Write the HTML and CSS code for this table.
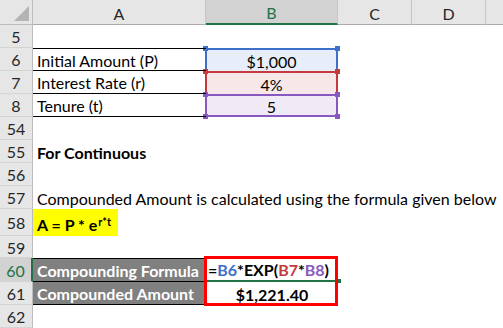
FILE: index.html
```html
<!DOCTYPE html>
<html>
<head>
<meta charset="utf-8">
<link rel="stylesheet" href="styles.css">
</head>
<body>
<div class="sheet">
  <div class="corner"><span class="tri"></span></div>
  <div class="ch">A</div>
  <div class="ch sel">B</div>
  <div class="ch">C</div>
  <div class="ch">D</div>
  <div class="ch last"></div>

  <div class="rh">5</div><div class="c"></div><div class="c"></div><div class="c"></div><div class="c"></div><div class="c"></div>

  <div class="rh">6</div>
  <div class="c a bt bb">Initial Amount (P)</div>
  <div class="c b rng blue">$1,000<i class="h tl"></i><i class="h tr"></i></div>
  <div class="c"></div><div class="c"></div><div class="c"></div>

  <div class="rh">7</div>
  <div class="c a bb">Interest Rate (r)</div>
  <div class="c b rng red">4%<i class="h tl"></i><i class="h tr"></i></div>
  <div class="c"></div><div class="c"></div><div class="c"></div>

  <div class="rh">8</div>
  <div class="c a bb">Tenure (t)</div>
  <div class="c b rng purple">5<i class="h tl"></i><i class="h tr"></i><i class="h bl"></i><i class="h br"></i></div>
  <div class="c"></div><div class="c"></div><div class="c"></div>

  <div class="rh">54</div><div class="c"></div><div class="c"></div><div class="c"></div><div class="c"></div><div class="c"></div>

  <div class="rh">55</div><div class="c a bold">For Continuous</div><div class="c"></div><div class="c"></div><div class="c"></div><div class="c"></div>

  <div class="rh">56</div><div class="c"></div><div class="c"></div><div class="c"></div><div class="c"></div><div class="c"></div>

  <div class="rh">57</div><div class="c a">Compounded Amount is calculated using the formula given below</div><div class="c"></div><div class="c"></div><div class="c"></div><div class="c"></div>

  <div class="rh">58</div><div class="c a hlcell"><span class="hl">A = P * e<sup>r*t</sup></span></div><div class="c"></div><div class="c"></div><div class="c"></div><div class="c"></div>

  <div class="rh">59</div><div class="c"></div><div class="c"></div><div class="c"></div><div class="c"></div><div class="c"></div>

  <div class="rh selrow">60</div>
  <div class="c a dark bt bb">Compounding Formula</div>
  <div class="c f60"><span>=</span><span class="fb">B6</span><span>*EXP(</span><span class="fr">B7</span><span>*</span><span class="fp">B8</span><span>)</span><i class="gh"></i><i class="redbox"></i></div>
  <div class="c"></div><div class="c"></div><div class="c"></div>

  <div class="rh">61</div>
  <div class="c a dark bb">Compounded Amount</div>
  <div class="c b bold">$1,221.40</div>
  <div class="c"></div><div class="c"></div><div class="c"></div>

  <div class="rh">62</div><div class="c"></div><div class="c"></div><div class="c"></div><div class="c"></div><div class="c"></div>
</div>
</body>
</html>
```

FILE: styles.css
```css
* { box-sizing: border-box; }
html, body { margin: 0; padding: 0; background: #fff; }
body { font-family: Lato, "Open Sans", sans-serif; font-size: 16px; color: #000; }

.sheet {
  display: grid;
  width: 503px;
  height: 328px;
  overflow: hidden;
  grid-template-columns: 33px 173px 132px 74px 74px 17px;
  grid-template-rows: 25px 23px 23px 23px 23px 23px 23px 23px 23px 27px 22px 24px 23px 23px;
}

.corner {
  background: #e6e6e6;
  border-right: 1px solid #bcbcbc;
  border-bottom: 1px solid #bcbcbc;
  position: relative;
}
.corner .tri {
  position: absolute;
  right: 3px; bottom: 3px;
  width: 0; height: 0;
  border-left: 15px solid transparent;
  border-bottom: 15px solid #b4b4b4;
}

.ch {
  background: #e6e6e6;
  border-right: 1px solid #c6c6c6;
  border-bottom: 1px solid #ababab;
  display: flex; align-items: center; justify-content: center;
  font-size: 16px; color: #262626;
  padding-top: 2px;
}
.ch.sel { background: #d2d2d2; color: #217346; border-bottom: 2px solid #217346; }
.ch.last { border-right: none; }

.rh {
  background: #e6e6e6;
  border-right: 1px solid #bcbcbc;
  border-bottom: 1px solid #d4d4d4;
  display: flex; align-items: center; justify-content: center;
  font-size: 16px; color: #262626;
  padding-top: 1px;
}
.rh.selrow { background: #d2d2d2; color: #217346; border-right: 2px solid #217346; }

.c {
  display: flex; align-items: center;
  padding: 1px 0 0 4px;
  white-space: nowrap;
  position: relative;
  min-width: 0;
}
.c.a { overflow: visible; z-index: 1; }
.c.b { justify-content: center; padding-left: 0; }
.bold { font-weight: bold; }
.bt { border-top: 1px solid #000; }
.bb { border-bottom: 1px solid #000; }

.rng { border-left: 2px solid; border-right: 2px solid; border-top: 2px solid; margin-left: -1px; }
.rng.blue { border-color: #3d70c8; background: #e8eef9; }
.rng.red { border-color: #c33b3f; background: #f8e7e8; }
.rng.purple { border-color: #8758bf; background: #efeaf6; border-bottom: 2px solid #8758bf; }
.h { position: absolute; width: 5px; height: 5px; }
.blue .h { background: #3d70c8; }
.red .h { background: #c33b3f; }
.purple .h { background: #8758bf; }
.h.tl { left: -4px; top: -4px; }
.h.tr { right: -4px; top: -4px; }
.h.bl { left: -4px; bottom: -4px; }
.h.br { right: -4px; bottom: -4px; }

.hlcell { padding: 0; }
.hl { background: #ffff00; font-weight: bold; display: flex; align-items: center; height: 27px; padding: 3px 4px 0 4px; width: 85px; }
.hl sup { font-size: 11px; line-height: 1; position: relative; top: -3px; margin-left: 1px; }

.dark { background: #808080; color: #fff; font-weight: bold; }

.f60 { font-weight: bold; padding-left: 2px; border-bottom: 2px solid #217346; }
.fb { color: #3d70c8; }
.fr { color: #c33b3f; }
.fp { color: #8758bf; }

.gh { position: absolute; right: -3px; bottom: -3px; width: 4px; height: 4px; background: #217346; }

.redbox {
  position: absolute;
  left: -2px; top: -2px;
  width: 134px; height: 50px;
  border: 3px solid #ff0000;
  z-index: 3;
  pointer-events: none;
}
```
